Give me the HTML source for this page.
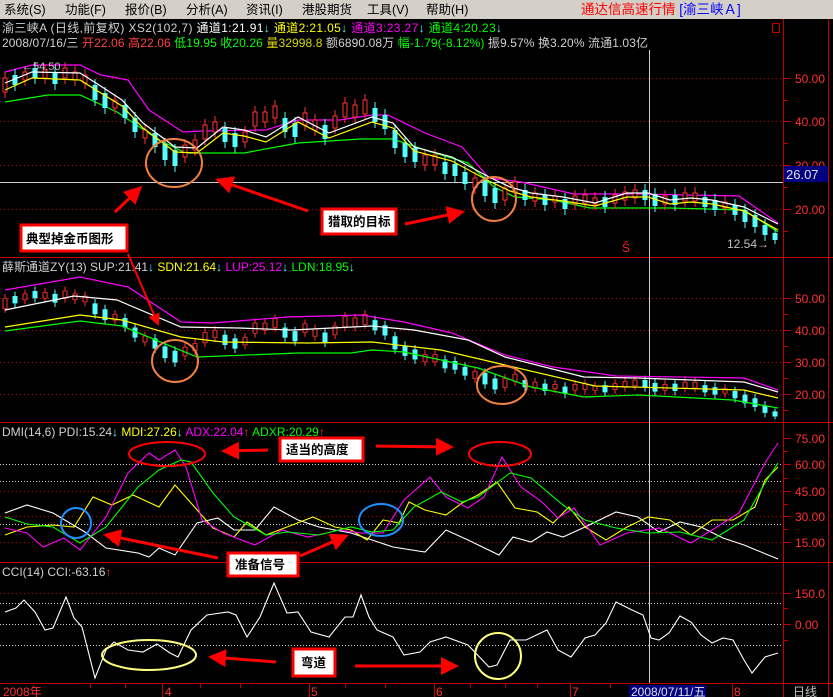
<!DOCTYPE html>
<html><head><meta charset="utf-8"><style>
html,body{margin:0;padding:0;background:#000;width:833px;height:697px;overflow:hidden}
svg{display:block}
text{font-family:"Liberation Sans","Noto Sans CJK SC",sans-serif;font-size:12px}
.m{font-size:12.5px;fill:#000}
.ax{fill:#ff3030;font-size:12px}
.lb{font-weight:bold;font-size:12.5px;fill:#000}
</style></head><body>
<svg width="833" height="697" viewBox="0 0 833 697" xmlns="http://www.w3.org/2000/svg">
<defs>
<marker id="ar" markerWidth="6" markerHeight="6" refX="5" refY="3" orient="auto" markerUnits="strokeWidth"><path d="M0,0 L6,3 L0,6 z" fill="#ff0000"/></marker>
<g id="cd">
<path stroke="#55ffff" stroke-width="1" fill="none" d="M15 69V91M35 62V84M55 66V90M95 79V106M105 87V114M125 99V124M135 112V138M155 127V153M165 138V166M175 144V172M225 122V148M235 127V153M285 112V138M295 117V143M325 119V145M375 102V128M385 109V135M395 124V154M405 137V163M415 142V168M445 156V180M455 158V182M465 166V190M485 174V202M495 182V209M525 184V206M545 189V211M565 193V215M605 191V213M645 184V206M655 188V212M675 189V211M705 191V213M715 194V216M735 199V221M745 204V228M755 209V233M765 219V241M775 229V244"/>
<path stroke="#55ffff" stroke-width="5" fill="none" d="M15 75V85M35 68V78M55 72V84M95 85V100M105 93V108M125 105V118M135 118V132M155 133V147M165 144V160M175 150V166M225 128V142M235 133V147M285 118V132M295 123V137M325 125V139M375 108V122M385 115V129M395 130V148M405 143V157M415 148V162M445 162V174M455 164V176M465 172V184M485 180V196M495 188V203M525 190V200M545 195V205M565 199V209M605 197V207M645 190V200M655 194V206M675 195V205M705 197V207M715 200V210M735 205V215M745 210V222M755 215V227M765 225V235M775 233V240"/>
<path stroke="#ff3333" stroke-width="1" fill="none" d="M5 72V98M25 66V86M45 64V84M65 62V84M75 66V86M85 69V89M115 94V114M145 124V144M185 139V163M195 134V156M205 119V145M215 116V138M245 126V148M255 106V132M265 106V128M275 100V124M305 107V131M315 114V136M335 110V134M345 97V123M355 99V123M365 94V120M425 149V171M435 149V171M475 172V194M505 182V206M515 176V198M535 187V207M555 190V208M575 190V210M585 189V209M595 192V210M615 189V209M625 186V206M635 184V204M665 190V210M685 187V207M695 187V207M725 196V214"/>
<g fill="#000" stroke="#ff3333" stroke-width="1">
<rect x="3" y="78" width="4" height="14"/><rect x="23" y="72" width="4" height="8"/><rect x="43" y="70" width="4" height="8"/><rect x="63" y="68" width="4" height="10"/><rect x="73" y="72" width="4" height="8"/><rect x="83" y="75" width="4" height="8"/><rect x="113" y="100" width="4" height="8"/><rect x="143" y="130" width="4" height="8"/><rect x="183" y="145" width="4" height="12"/><rect x="193" y="140" width="4" height="10"/><rect x="203" y="125" width="4" height="14"/><rect x="213" y="122" width="4" height="10"/><rect x="243" y="132" width="4" height="10"/><rect x="253" y="112" width="4" height="14"/><rect x="263" y="112" width="4" height="10"/><rect x="273" y="106" width="4" height="12"/><rect x="303" y="113" width="4" height="12"/><rect x="313" y="120" width="4" height="10"/><rect x="333" y="116" width="4" height="12"/><rect x="343" y="103" width="4" height="14"/><rect x="353" y="105" width="4" height="12"/><rect x="363" y="100" width="4" height="14"/><rect x="423" y="155" width="4" height="10"/><rect x="433" y="155" width="4" height="10"/><rect x="473" y="178" width="4" height="10"/><rect x="503" y="188" width="4" height="12"/><rect x="513" y="182" width="4" height="10"/><rect x="533" y="193" width="4" height="8"/><rect x="553" y="196" width="4" height="6"/><rect x="573" y="196" width="4" height="8"/><rect x="583" y="195" width="4" height="8"/><rect x="593" y="198" width="4" height="6"/><rect x="613" y="195" width="4" height="8"/><rect x="623" y="192" width="4" height="8"/><rect x="633" y="190" width="4" height="8"/><rect x="663" y="196" width="4" height="8"/><rect x="683" y="193" width="4" height="8"/><rect x="693" y="193" width="4" height="8"/><rect x="723" y="202" width="4" height="6"/>
</g>
</g>
</defs>

<rect x="0" y="0" width="833" height="19" fill="#d4d0c8"/>
<text class="m" x="4" y="14">系统(S)</text>
<text class="m" x="65" y="14">功能(F)</text>
<text class="m" x="125" y="14">报价(B)</text>
<text class="m" x="186" y="14">分析(A)</text>
<text class="m" x="246" y="14">资讯(I)</text>
<text class="m" x="302" y="14">港股期货</text>
<text class="m" x="367" y="14">工具(V)</text>
<text class="m" x="426" y="14">帮助(H)</text>
<text x="581" y="14" style="font-size:13.5px" fill="#ff0000">通达信高速行情 <tspan fill="#0000ff">[渝三峡Ａ]</tspan></text>

<g stroke="#c00000" stroke-width="1" fill="none">
<line x1="783.5" y1="19" x2="783.5" y2="697"/>
<line x1="828.5" y1="19" x2="828.5" y2="697"/>
<line x1="0" y1="257.5" x2="833" y2="257.5"/>
<line x1="0" y1="422.5" x2="833" y2="422.5"/>
<line x1="0" y1="562.5" x2="833" y2="562.5"/>
<line x1="0" y1="683.5" x2="833" y2="683.5"/>
<rect x="772.5" y="23.5" width="7" height="9"/>
</g>

<g stroke="#c00000" stroke-width="1" stroke-dasharray="1,3">
<line x1="0" y1="78.5" x2="783" y2="78.5"/><line x1="0" y1="121.5" x2="783" y2="121.5"/><line x1="0" y1="165.5" x2="783" y2="165.5"/><line x1="0" y1="209.5" x2="783" y2="209.5"/>
<line x1="0" y1="298.5" x2="783" y2="298.5"/><line x1="0" y1="330.5" x2="783" y2="330.5"/><line x1="0" y1="362.5" x2="783" y2="362.5"/><line x1="0" y1="394.5" x2="783" y2="394.5"/>
<line x1="0" y1="491.5" x2="783" y2="491.5"/><line x1="0" y1="516.5" x2="783" y2="516.5"/><line x1="0" y1="542.5" x2="783" y2="542.5"/>
<line x1="0" y1="593.5" x2="783" y2="593.5"/>
</g>
<g stroke="#cccccc" stroke-width="1" stroke-dasharray="1,2">
<line x1="0" y1="464.5" x2="783" y2="464.5"/><line x1="0" y1="481.5" x2="783" y2="481.5"/><line x1="0" y1="524.5" x2="783" y2="524.5"/>
<line x1="0" y1="603.5" x2="783" y2="603.5"/><line x1="0" y1="624.5" x2="783" y2="624.5"/><line x1="0" y1="645.5" x2="783" y2="645.5"/>
</g>
<line x1="649.5" y1="50" x2="649.5" y2="683" stroke="#cccccc"/>
<line x1="0" y1="182.5" x2="783" y2="182.5" stroke="#cccccc"/>

<g stroke="#c00000">
<path d="M784 78.5h7M784 100.5h4M784 121.5h7M784 143.5h4M784 165.5h7M784 187.5h4M784 209.5h7M784 231.5h4M784 298.5h7M784 314.5h4M784 330.5h7M784 346.5h4M784 362.5h7M784 378.5h4M784 394.5h7M784 410.5h4M784 438.5h7M784 451.5h4M784 464.5h7M784 478.5h4M784 491.5h7M784 504.5h4M784 516.5h7M784 529.5h4M784 542.5h7M784 593.5h7M784 608.5h4M784 624.5h7M784 640.5h4"/>
<path d="M90.5 684v4M125.5 684v4M162.5 684v13M200.5 684v4M240.5 684v4M309.5 684v13M345.5 684v4M385.5 684v4M434.5 684v13M470.5 684v4M505.5 684v4M537.5 684v4M570.5 684v13M610.5 684v4M732.5 684v13"/>
</g>
<g class="ax">
<text class="ax" x="795" y="83">50.00</text><text class="ax" x="795" y="126">40.00</text><text class="ax" x="795" y="170">30.00</text><text class="ax" x="795" y="214">20.00</text>
<text class="ax" x="795" y="303">50.00</text><text class="ax" x="795" y="335">40.00</text><text class="ax" x="795" y="367">30.00</text><text class="ax" x="795" y="399">20.00</text>
<text class="ax" x="795" y="443">75.00</text><text class="ax" x="795" y="469">60.00</text><text class="ax" x="795" y="496">45.00</text><text class="ax" x="795" y="521">30.00</text><text class="ax" x="795" y="547">15.00</text>
<text class="ax" x="795" y="598">150.0</text><text class="ax" x="795" y="629">0.00</text>
</g>
<rect x="784" y="166" width="44" height="16" fill="#000080"/>
<text x="786" y="179" fill="#e0e0e0" style="font-size:13px">26.07</text>

<text x="2" y="32" fill="#d0d0d0" textLength="500" lengthAdjust="spacing">渝三峡A (日线,前复权) XS2(102,7) <tspan fill="#fff">通道1:21.91</tspan><tspan fill="#55ffff">↓</tspan> <tspan fill="#ffff00">通道2:21.05</tspan><tspan fill="#55ffff">↓</tspan> <tspan fill="#ff00ff">通道3:23.27</tspan><tspan fill="#55ffff">↓</tspan> <tspan fill="#00ff00">通道4:20.23</tspan><tspan fill="#55ffff">↓</tspan></text>
<text x="2" y="47" fill="#d0d0d0" textLength="646" lengthAdjust="spacing">2008/07/16/三 <tspan fill="#ff4040">开22.06 高22.06</tspan> <tspan fill="#00ff00">低19.95 收20.26</tspan> <tspan fill="#d8d800">量32998.8</tspan> 额6890.08万 <tspan fill="#00ff00">幅-1.79(-8.12%)</tspan> 振9.57% 换3.20% 流通1.03亿</text>
<text x="2" y="271" fill="#d0d0d0">薛斯通道ZY(13) SUP:21.41<tspan fill="#55ffff">↓</tspan> <tspan fill="#ffff00">SDN:21.64</tspan><tspan fill="#55ffff">↓</tspan> <tspan fill="#ff00ff">LUP:25.12</tspan><tspan fill="#55ffff">↓</tspan> <tspan fill="#00ff00">LDN:18.95</tspan><tspan fill="#55ffff">↓</tspan></text>
<text x="2" y="436" fill="#d0d0d0">DMI(14,6) PDI:15.24<tspan fill="#55ffff">↓</tspan> <tspan fill="#ffff00">MDI:27.26</tspan><tspan fill="#55ffff">↓</tspan> <tspan fill="#ff00ff">ADX:22.04</tspan><tspan fill="#ff3030">↑</tspan> <tspan fill="#00ff00">ADXR:20.29</tspan><tspan fill="#ff3030">↑</tspan></text>
<text x="2" y="576" fill="#d0d0d0">CCI(14) CCI:-63.16<tspan fill="#ff3030">↑</tspan></text>

<g fill="none" stroke-width="1.2">
<polyline stroke="#00ff00" points="5,102 48,95 80,95 117,112 159,140 186,153 244,153 298,143 361,139 393,139 425,150 468,163 494,187 515,197 553,200 590,208 638,208 670,208 744,210 778,232"/>
<polyline stroke="#ff00ff" points="5,72 32,65 80,65 101,75 128,80 149,110 183,132 202,131 266,130 298,120 340,120 372,115 388,115 425,133 462,147 489,178 521,182 574,194 638,194 739,196 778,223"/>
</g>
<use href="#cd"/>
<g fill="none" stroke-width="1.2">
<polyline stroke="#ffff00" points="5,90 32,78 80,80 96,90 122,106 143,128 175,152 197,153 223,133 244,136 266,142 298,122 329,138 372,122 393,128 414,151 452,161 489,181 510,191 531,197 563,201 595,206 627,197 648,197 670,204 691,202 712,204 744,211 778,230"/>
<polyline stroke="#ffffff" points="5,83 32,72 80,73 96,83 122,100 143,123 175,147 197,148 223,127 244,130 266,137 298,117 329,133 372,117 393,123 414,147 452,157 489,177 510,187 531,193 563,197 595,203 627,193 648,193 670,200 691,198 712,200 744,207 778,224"/>
</g>
<text x="22" y="70" fill="#c0c0c0" style="font-size:11px">←54.50</text>
<text x="727" y="248" fill="#c0c0c0" style="font-size:12px">12.54→</text>
<text x="622" y="252" fill="#ff2020" style="font-size:12px">Ŝ</text>

<use href="#cd" transform="translate(0,241.3) scale(1,0.73)"/>
<g fill="none" stroke-width="1.2">
<polyline stroke="#ff00ff" points="5,290 80,277 128,287 181,322 213,323 287,317 361,315 404,322 452,333 505,355 553,367 616,376 744,378 778,390"/>
<polyline stroke="#ffffff" points="5,310 74,296 117,300 181,327 239,328 292,330 372,326 414,330 468,340 505,357 584,377 638,378 744,382 778,392"/>
<polyline stroke="#ffff00" points="5,327 80,315 122,320 181,337 223,342 308,343 372,342 441,350 505,365 595,386 744,390 778,398"/>
<polyline stroke="#00ff00" points="5,331 80,321 122,326 197,357 298,353 351,353 372,350 404,352 478,368 531,387 584,397 638,395 733,400 778,408"/>
</g>

<g fill="none" stroke-width="1.1">
<polyline stroke="#ffffff" points="5,513 27,505 53,513 85,532 106,548 138,553 149,557 159,548 175,555 197,523 218,518 234,530 255,530 274,507 298,520 319,527 351,533 372,540 393,547 425,552 446,530 468,540 499,555 513,537 531,542 547,532 563,537 585,527 616,512 638,517 659,532 680,522 701,527 723,538 744,545 778,559"/>
<polyline stroke="#ffff00" points="5,535 27,527 53,525 74,527 93,497 112,505 133,495 159,507 175,485 191,503 213,528 234,537 247,522 266,535 287,527 313,517 335,527 351,530 367,540 383,520 399,523 409,502 425,510 446,515 462,503 478,495 497,482 515,508 537,512 553,523 569,507 585,527 606,540 627,527 648,517 670,520 691,535 712,520 733,520 755,507 765,480 778,467"/>
<polyline stroke="#ff00ff" points="5,528 27,533 43,547 64,538 80,550 106,517 128,473 149,453 159,460 175,450 186,467 202,520 223,533 255,545 282,530 308,537 340,530 361,533 383,533 404,500 430,477 446,497 468,508 484,497 502,457 521,487 542,502 558,518 574,508 600,545 627,533 659,528 691,543 712,530 739,513 765,463 778,443"/>
<polyline stroke="#00ff00" points="5,517 27,524 53,527 80,543 106,527 138,487 159,470 181,460 191,462 213,493 234,517 266,535 287,532 319,535 351,527 372,532 393,530 414,507 441,492 462,502 478,497 510,473 531,478 563,505 585,520 616,528 648,533 680,532 712,540 744,520 765,483 778,463"/>
</g>

<polyline fill="none" stroke="#ffffff" stroke-width="1.1" points="5,612 16,608 24,600 35,612 45,630 53,628 66,597 74,618 82,627 95,678 106,650 114,642 128,650 143,652 157,644 170,653 178,657 191,630 207,615 228,612 236,615 247,637 260,617 274,583 287,613 298,612 311,632 329,637 345,617 353,617 361,595 369,617 377,630 393,637 404,655 420,652 430,642 446,637 468,645 489,667 497,665 510,640 526,640 547,630 558,650 571,657 585,638 595,635 606,623 616,602 632,610 643,615 651,638 659,640 669,633 680,616 691,622 701,635 712,643 723,638 733,640 744,660 752,673 765,657 778,653"/>

<rect x="629" y="685" width="77" height="12" fill="#000080"/>
<g class="ax"><text class="ax" x="3" y="696">2008年</text><text class="ax" x="165" y="696">4</text><text class="ax" x="311" y="696">5</text><text class="ax" x="436" y="696">6</text><text class="ax" x="572" y="696">7</text><text class="ax" x="734" y="696">8</text></g>
<text x="631" y="696" fill="#e0e0e0">2008/07/11/五</text>
<text x="793" y="696" fill="#c0c0c0">日线</text>

<g fill="none" stroke="#f08040" stroke-width="2">
<ellipse cx="174" cy="163" rx="28" ry="24"/><ellipse cx="494" cy="199" rx="22" ry="22"/>
<ellipse cx="175" cy="361" rx="23" ry="21"/><ellipse cx="502" cy="385" rx="25" ry="19"/>
</g>
<g fill="none" stroke="#ff0000" stroke-width="2">
<ellipse cx="167" cy="454" rx="38" ry="12"/><ellipse cx="500" cy="454" rx="31" ry="12"/>
</g>
<g fill="none" stroke="#1e90ff" stroke-width="2">
<ellipse cx="76" cy="523" rx="15" ry="15"/><ellipse cx="381" cy="520" rx="22" ry="16"/>
</g>
<g fill="none" stroke="#ffff80" stroke-width="2">
<ellipse cx="149" cy="655" rx="47" ry="15"/><ellipse cx="498" cy="656" rx="23" ry="23"/>
</g>
<g stroke="#ff0000" stroke-width="3" fill="none" marker-end="url(#ar)">
<line x1="115" y1="212" x2="140" y2="188"/>
<line x1="308" y1="211" x2="218" y2="180"/>
<line x1="405" y1="224" x2="462" y2="212"/>
<line x1="268" y1="450" x2="224" y2="451"/>
<line x1="376" y1="446" x2="451" y2="447"/>
<line x1="218" y1="558" x2="106" y2="535"/>
<line x1="300" y1="556" x2="346" y2="536"/>
<line x1="276" y1="662" x2="211" y2="657"/>
<line x1="355" y1="666" x2="456" y2="666"/>
</g>
<line x1="128" y1="254" x2="158" y2="324" stroke="#ff0000" stroke-width="2" marker-end="url(#ar)"/>
<g fill="#fff" stroke="#ff0000" stroke-width="3">
<rect x="21" y="225" width="106" height="26"/>
<rect x="322" y="209" width="74" height="25"/>
<rect x="280" y="438" width="83" height="23"/>
<rect x="228" y="553" width="70" height="23"/>
<rect x="293" y="649" width="42" height="27"/>
</g>
<text class="lb" x="26" y="243">典型掉金币图形</text>
<text class="lb" x="328" y="226">猎取的目标</text>
<text class="lb" x="286" y="454">适当的高度</text>
<text class="lb" x="235" y="569">准备信号</text>
<text class="lb" x="301" y="667">弯道</text>
</svg>
</body></html>
